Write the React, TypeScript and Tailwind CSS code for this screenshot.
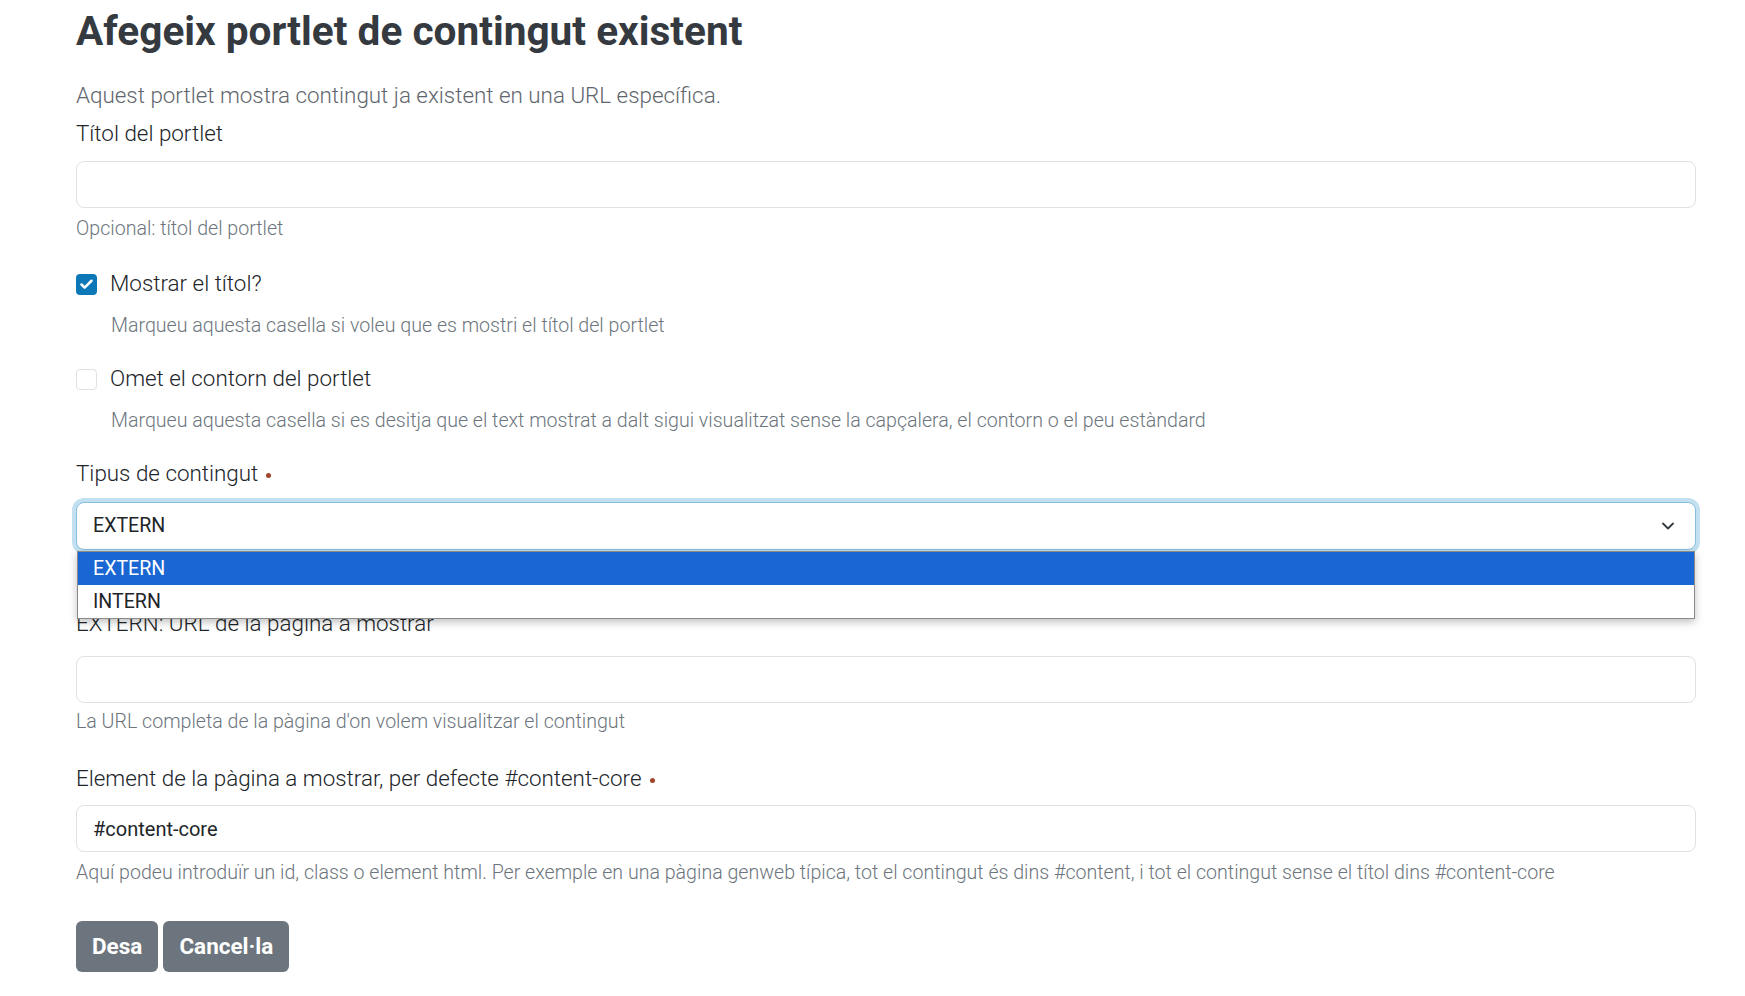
import { Check, ChevronDown } from "lucide-react";

function Help({ children, indent = false }: { children: React.ReactNode; indent?: boolean }) {
  return (
    <p className={`text-[19.6px] leading-[27px] font-light text-[#6c757d] ${indent ? "pl-[35px]" : ""}`}>
      {children}
    </p>
  );
}

function Label({ children, required = false }: { children: React.ReactNode; required?: boolean }) {
  return (
    <label className="block text-[22.4px] leading-[30px] font-light text-[#212529]">
      {children}
      {required && <span className="ml-[8px] inline-block w-[5px] h-[5px] rounded-full bg-[#a0442c] align-middle" />}
    </label>
  );
}

function TextInput({ value = "" }: { value?: string }) {
  return (
    <div className="h-[47px] rounded-[8px] border border-[#dee2e6] bg-white px-[16px] flex items-center text-[20px] text-[#212529]">
      {value}
    </div>
  );
}

function CheckRow({ checked, label }: { checked: boolean; label: string }) {
  return (
    <div className="flex items-center h-[30px]">
      <span
        className={`w-[21px] h-[21px] rounded-[4px] flex items-center justify-center ${
          checked ? "bg-[#0d78b8]" : "border border-[#dee2e6] bg-white"
        }`}
      >
        {checked && <Check size={15} strokeWidth={4} className="text-white" />}
      </span>
      <span className="ml-[13px] text-[22.4px] font-light text-[#212529]">{label}</span>
    </div>
  );
}

export default function App() {
  return (
    <main className="min-h-screen bg-white font-['Roboto',sans-serif]">
      <div className="ml-[76px] w-[1620px] pt-[7px]">
        {/* Title */}
        <h1 className="text-[40.6px] leading-[48px] font-bold text-[#343a40]">
          Afegeix portlet de contingut existent
        </h1>
        <p className="mt-[25px] text-[22.4px] leading-[30px] font-light text-[#5f666d]">
          Aquest portlet mostra contingut ja existent en una URL específica.
        </p>

        {/* Títol */}
        <div className="mt-[8px]">
          <Label>Títol del portlet</Label>
          <div className="mt-[13px]">
            <TextInput />
          </div>
          <div className="mt-[7px]">
            <Help>Opcional: títol del portlet</Help>
          </div>
        </div>

        {/* Checkboxes */}
        <div className="mt-[27px]">
          <CheckRow checked label="Mostrar el títol?" />
          <div className="mt-[13px]">
            <Help indent>Marqueu aquesta casella si voleu que es mostri el títol del portlet</Help>
          </div>
        </div>
        <div className="mt-[25px]">
          <CheckRow checked={false} label="Omet el contorn del portlet" />
          <div className="mt-[13px]">
            <Help indent>
              Marqueu aquesta casella si es desitja que el text mostrat a dalt sigui visualitzat sense la capçalera, el
              contorn o el peu estàndard
            </Help>
          </div>
        </div>

        {/* Tipus de contingut */}
        <div className="mt-[24px]">
          <Label required>Tipus de contingut</Label>
          <div className="relative mt-[14px]">
            <div className="h-[48px] rounded-[8px] border border-[#86bfdf] ring-4 ring-[#c2e0ef] bg-white pl-[16px] pr-[17px] flex items-center justify-between text-[19.6px] text-[#212529]">
              <span>EXTERN</span>
              <ChevronDown size={20} strokeWidth={2.2} className="text-[#343a40]" />
            </div>
            {/* open native list */}
            <div className="absolute left-[1px] right-[1px] top-[49px] z-10 bg-white border border-[#8a8a8a] shadow-[0_3px_8px_rgba(0,0,0,0.25)] text-[19.6px]">
              <div className="h-[33px] flex items-center pl-[15px] bg-[#1a66d2] text-white">EXTERN</div>
              <div className="h-[33px] flex items-center pl-[15px] text-[#212529]">INTERN</div>
            </div>
          </div>
        </div>

        {/* URL */}
        <div className="mt-[58px]">
          <Label>EXTERN: URL de la pàgina a mostrar</Label>
          <div className="mt-[18px]">
            <TextInput />
          </div>
          <div className="mt-[5px]">
            <Help>La URL completa de la pàgina d'on volem visualitzar el contingut</Help>
          </div>
        </div>

        {/* Element */}
        <div className="mt-[28px]">
          <Label required>Element de la pàgina a mostrar, per defecte #content-core</Label>
          <div className="mt-[12px]">
            <TextInput value="#content-core" />
          </div>
          <div className="mt-[7px]">
            <Help>
              Aquí podeu introduïr un id, class o element html. Per exemple en una pàgina genweb típica, tot el contingut
              és dins #content, i tot el contingut sense el títol dins #content-core
            </Help>
          </div>
        </div>

        {/* Actions */}
        <div className="mt-[35px] flex gap-[5px]">
          <button className="h-[51px] px-[16px] rounded-[6px] bg-[#6c757d] text-white text-[22.5px] font-bold">
            Desa
          </button>
          <button className="h-[51px] px-[16px] rounded-[6px] bg-[#6c757d] text-white text-[22.5px] font-bold">
            Cancel·la
          </button>
        </div>
      </div>
    </main>
  );
}
